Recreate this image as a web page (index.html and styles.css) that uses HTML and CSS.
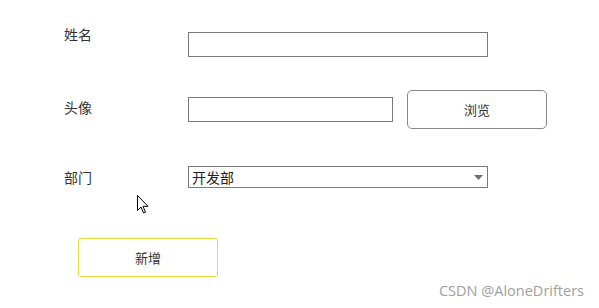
FILE: index.html
```html
<!DOCTYPE html>
<html lang="zh-CN">
<head>
    <meta charset="UTF-8">
    <title>新增员工</title>
    <link rel="stylesheet" href="styles.css">
</head>
<body>

    <div class="form">
        <div class="row row-name">
            <label class="label">姓名</label>
            <input type="text" class="field">
        </div>

        <div class="row row-avatar">
            <label class="label">头像</label>
            <input type="text" class="field short">
            <button class="btn browse">浏览</button>
        </div>

        <div class="row row-dept">
            <label class="label">部门</label>
            <span class="select-wrap">
                <select class="field select">
                    <option>开发部</option>
                    <option>测试部</option>
                    <option>运维部</option>
                </select>
                <svg class="arrow" width="9" height="5" viewBox="0 0 9 5"><path d="M0 0 H9 L4.5 5 Z" fill="#707070"/></svg>
            </span>
        </div>

        <div class="row row-submit">
            <button class="btn add">新增</button>
        </div>
    </div>

    <svg class="cursor" width="12" height="19" viewBox="0 0 12 19">
        <path d="M0.5 0.5 V15.5 L4 12 L6.5 18 L8.5 17.2 L6 11.3 H11 Z" fill="#fff" stroke="#000" stroke-width="1" stroke-linejoin="round"/>
    </svg>

    <div class="watermark">CSDN @AloneDrifters</div>

</body>
</html>
```

FILE: styles.css
```css
body {
    margin: 0;
    padding: 0;
    background-color: #fff;
    font-family: "Noto Sans CJK SC", "Noto Sans", sans-serif;
    font-size: 14px;
    color: #333;
    width: 599px;
    height: 308px;
    overflow: hidden;
    position: relative;
}
.form {
    padding: 24px 0 0 64px;
}
.row {
    display: flex;
}
.label {
    width: 124px;
    line-height: 20px;
    flex-shrink: 0;
}
.field {
    box-sizing: border-box;
    width: 300px;
    height: 25px;
    margin: 0;
    border: 1px solid #7a7a7a;
    border-radius: 0;
    background-color: #fff;
    outline: none;
}
.row-name {
    align-items: flex-start;
}
.row-name .field {
    margin-top: 8px;
}
.row-avatar {
    margin-top: 33px;
    align-items: center;
}
.row-avatar .label {
    margin-bottom: 5px;
}
.field.short {
    width: 205px;
}
.btn {
    box-sizing: border-box;
    background-color: #fff;
    font-family: "Noto Sans CJK SC", sans-serif;
    font-size: 13px;
    color: #333;
    cursor: pointer;
}
.browse {
    width: 140px;
    height: 39px;
    margin-left: 14px;
    border: 1px solid #888;
    border-radius: 5px;
}
.row-dept {
    margin-top: 37px;
    align-items: flex-start;
}
.row-dept .label {
    margin-top: 1px;
}
.select-wrap {
    position: relative;
    display: inline-block;
}
.select {
    height: 22px;
    padding: 0 0 0 3px;
    font-family: "Noto Sans CJK SC", sans-serif;
    font-size: 14px;
    color: #222;
    line-height: 20px;
    appearance: none;
    -webkit-appearance: none;
    display: block;
}
.select-wrap .arrow {
    position: absolute;
    right: 5px;
    top: 9px;
    pointer-events: none;
}
.row-submit {
    margin-top: 50px;
    padding-left: 14px;
}
.add {
    width: 140px;
    height: 39px;
    border: 1px solid #e4dc3c;
    border-radius: 3px;
}
.cursor {
    position: absolute;
    left: 137px;
    top: 195px;
}
.watermark {
    position: absolute;
    right: 15px;
    bottom: 8px;
    font-family: "Open Sans", sans-serif;
    font-size: 14.5px;
    color: #a0a0a0;
}
```
